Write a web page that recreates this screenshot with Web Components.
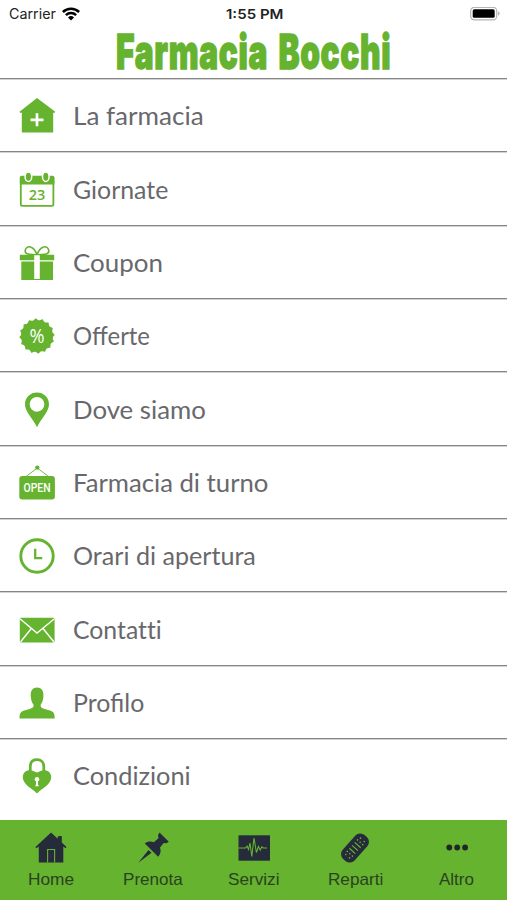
<!DOCTYPE html>
<html lang="it">
<head>
<meta charset="utf-8">
<title>Farmacia Bocchi</title>
<style>
    body {
        margin: 0;
        background: #fff;
    }
</style>
</head>
<body>
<pharmacy-app></pharmacy-app>

<script>
const GREEN = '#65b32e';

const ICONS = {
    house: `<path fill="currentColor" d="M18 0L.5 13.8l.9 1.2 1.400-.5V34.5h31.400V14.500l1.200.5.900-1.200z"/>
        <path stroke="#fff" stroke-width="2.7" d="M18 15.3v13M11.5 21.8h13"/>`,
    calendar: `<rect x="1.8" y="5" width="32.6" height="28.8" rx="1.6" fill="#fff" stroke="currentColor" stroke-width="1.8"/>
        <path fill="currentColor" d="M.8 12.6V5.5Q.8 3.8 2.5 3.8h31.2q1.7 0 1.7 1.7v7.1z"/>
        <ellipse cx="9.4" cy="4.7" rx="3.3" ry="4.700" fill="currentColor" stroke="#fff" stroke-width="1.5"/>
        <ellipse cx="26.8" cy="4.7" rx="3.3" ry="4.700" fill="currentColor" stroke="#fff" stroke-width="1.5"/>
        <text x="18" y="28.300" text-anchor="middle" font-family="Open Sans, sans-serif" font-size="15" font-weight="600" textLength="16.500" lengthAdjust="spacingAndGlyphs" fill="currentColor">23</text>`,
    gift: `<path fill="none" stroke="currentColor" stroke-width="1.6" d="M18 10C12 9 5.5 10 6.2 5.5 7.4-.5 15 .5 18 10zM18 10c6-1 12.5 0 11.8-4.5C28.600-.5 21 .5 18 10z"/>
        <path fill="currentColor" d="M.8 9.700h34.400v5.500H.8zM2.300 16.500H34V35H2.300z"/>
        <path fill="#fff" d="M15.200 10.300h5.600V34h-5.600z"/>`,
    percent: `<path class="seal" fill="currentColor"/>
        <text x="18" y="24.800" text-anchor="middle" font-family="Open Sans, sans-serif" font-size="19.500" textLength="15" lengthAdjust="spacingAndGlyphs" fill="#fff">%</text>`,
    pin: `<path fill="currentColor" fill-rule="evenodd" d="M18 35.300C14.800 27.500 6 20 6 12.200 6 5.300 11.400.5 18 .5s12 4.800 12 11.700c0 7.800-8.800 15.300-12 23.100zM18 4.900a7.400 7.400 0 1 0 0 14.800 7.400 7.400 0 0 0 0-14.800z"/>`,
    open: `<path fill="none" stroke="currentColor" stroke-width=".9" d="M7 11.500L18.300 3 29.500 11.500"/>
        <circle cx="18.300" cy="2.600" r="2.200" fill="currentColor"/>
        <rect x=".3" y="11" width="35.600" height="23.500" rx="3" fill="currentColor"/>
        <text x="18" y="27.300" text-anchor="middle" font-family="Roboto, sans-serif" font-size="12.300" font-weight="500" textLength="27" lengthAdjust="spacingAndGlyphs" fill="#fff">OPEN</text>`,
    clock: `<circle cx="18" cy="18" r="16.200" fill="none" stroke="currentColor" stroke-width="2.900"/>
        <path fill="none" stroke="currentColor" stroke-width="2.300" d="M16.200 10.800v9.300h7"/>`,
    mail: `<rect x=".8" y="5.800" width="34.800" height="24.800" rx="1.300" fill="currentColor"/>
        <path fill="none" stroke="#fff" stroke-width="1.400" d="M1 6.800L18 21 35.400 6.800M1.500 30l10.800-13.500M35 30L24 16.500"/>`,
    user: `<path fill="currentColor" d="M.5 33.500c0-6 1.500-7.200 6.500-8.500 5.500-1.300 8-2 7.500-5.500-1.700-1.800-2.500-5-2.700-8C11.300 5.500 13.800 2.500 18 2.500s6.900 3 6.400 9c-.2 3-1 6.200-2.700 8-.5 3.500 2 4.200 7.500 5.500 5 1.300 6.500 2.500 6.500 8.500z"/>`,
    heartlock: `<path fill="none" stroke="currentColor" stroke-width="2.700" d="M11.300 15V8.500C11.300 4 14 1.600 18 1.600S24.800 4 24.800 8.500V15"/>
        <path fill="currentColor" d="M18 35.500C13 30.500 3.800 26.500 3.800 19.300 3.800 14.800 7 12.200 10.700 12.200c3.300 0 5.700 1.600 7.300 2.300 1.600-.7 4-2.300 7.300-2.300 3.700 0 6.900 2.600 6.900 7.100C32.200 26.500 23 30.500 18 35.500z"/>
        <circle cx="18" cy="21.300" r="2.300" fill="#fff"/>
        <path fill="#fff" d="M17 22h2v4.500l1 1.700h-4l1-1.700z"/>`,
    home: `<path fill="currentColor" d="M16 .5L.5 15l1 1.200L3.800 14.500V30.500h24.500V14.500l2.200 1.700 1-1.200-4.700-4.400V4l-4 .2v2.600z"/>
        <path fill="none" stroke="${GREEN}" stroke-width="1.100" d="M12.600 30.500V17.500h7v13"/>`,
    pushpin: `<path fill="currentColor" d="M22.500.5l9.300 9.300-2.500 1.500-2.600-.4-3.700 4.700c1.200 3.500.8 6.300-1.800 9.200L7.800 11.500c2.800-2.200 6-2.500 9-1.200l4.700-4-.5-3zM11.500 18l3 2.800L1.300 30.800z"/>`,
    pulse: `<path fill="currentColor" d="M.5 3.300h31.500v25.400H.5z"/>
        <path fill="none" stroke="${GREEN}" stroke-width="1.100" d="M.5 16h7l1.600-2 1.400 3.500L12 11l1.800 13.500L16 6l2.400 14.500 2-6 1.800 3.500 1.600-3.200 1.500 1.200H29"/>`,
    plaster: `<g transform="rotate(-48 16 16)">
            <rect x="0" y="8" width="32" height="16" rx="6.500" fill="currentColor"/>
            <path stroke="${GREEN}" stroke-width="1.200" d="M12 12v8M16 12v8M20 12v8"/>
            <g fill="${GREEN}"><circle cx="5" cy="13.500" r=".8"/><circle cx="5" cy="18.500" r=".8"/><circle cx="8.300" cy="12.500" r=".8"/><circle cx="8.300" cy="16" r=".8"/><circle cx="8.300" cy="19.500" r=".8"/><circle cx="27" cy="13.500" r=".8"/><circle cx="27" cy="18.500" r=".8"/><circle cx="23.700" cy="12.500" r=".8"/><circle cx="23.700" cy="16" r=".8"/><circle cx="23.700" cy="19.500" r=".8"/></g>
        </g>`,
    dots: `<g fill="#22262a"><circle cx="8.300" cy="15.500" r="2.900"/><circle cx="16.200" cy="15.500" r="2.900"/><circle cx="24.100" cy="15.500" r="2.900"/></g>`
};

class AppIcon extends HTMLElement {
    connectedCallback() {
        const size = Number(this.getAttribute('size')) || 36;
        this.attachShadow({ mode: 'open' });
        this.shadowRoot.innerHTML = `
            <style>
                :host { display: block; width: ${size}px; height: ${size}px; flex: none; }
                svg { display: block; overflow: visible; }
            </style>
            <svg width="${size}" height="${size}" viewBox="0 0 ${size} ${size}">${ICONS[this.getAttribute('name')]}</svg>
        `;

        // toothed edge of the discount badge
        const seal = this.shadowRoot.querySelector('.seal');
        if (seal) {
            const points = [];
            for (let i = 0; i < 180; i++) {
                const a = i * Math.PI / 90;
                const r = 15.9 + 1.9 * (1 - Math.abs(Math.sin(a * 8 + 0.6)));
                points.push((18 + r * Math.sin(a)).toFixed(2) + ' ' + (18 - r * Math.cos(a)).toFixed(2));
            }
            seal.setAttribute('d', 'M' + points.join('L') + 'z');
        }
    }
}
customElements.define('app-icon', AppIcon);

// Single line of text condensed or widened to a given width
class FitText extends HTMLElement {
    connectedCallback() {
        const width = Number(this.getAttribute('width'));
        this.attachShadow({ mode: 'open' });
        this.shadowRoot.innerHTML = `
            <style>
                :host { display: block; width: ${width}px; white-space: nowrap; }
                span { display: inline-block; transform-origin: 0 50%; }
            </style>
            <span><slot></slot></span>
        `;
        const span = this.shadowRoot.querySelector('span');
        span.style.transform = `scaleX(${width / span.offsetWidth})`;
    }
}
customElements.define('fit-text', FitText);

class StatusBar extends HTMLElement {
    connectedCallback() {
        this.attachShadow({ mode: 'open' });
        this.shadowRoot.innerHTML = `
            <style>
                :host {
                    display: grid;
                    grid-template-columns: 1fr auto 1fr;
                    align-items: center;
                    height: 28px;
                    padding: 0 7px 0 9px;
                    box-sizing: border-box;
                    font: 14px/28px Inter, sans-serif;
                    color: #222;
                }
                .carrier { display: flex; align-items: center; gap: 6px; }
                .time { font-size: 13.500px; font-weight: 600; }
                .battery { justify-self: end; }
                svg { display: block; }
            </style>
            <div class="carrier">
                <fit-text width="47">Carrier</fit-text>
                <svg width="18" height="14" viewBox="0 0 18 14">
                    <path fill="none" stroke="#000" stroke-width="2.500" d="M.9 5a11.500 11.500 0 0 1 16.200 0M3.900 8.200a7.300 7.300 0 0 1 10.200 0"/>
                    <path fill="#000" d="M9 13.400l-3-3a4.300 4.300 0 0 1 6 0z"/>
                </svg>
            </div>
            <fit-text class="time" width="58">1:55 PM</fit-text>
            <svg class="battery" width="30" height="14" viewBox="0 0 30 14">
                <rect x=".7" y=".3" width="26" height="12.500" rx="3.600" fill="#fff" stroke="#b5b5b5" stroke-width="1.200"/>
                <rect x="2.700" y="2.300" width="22" height="8.500" rx="1.600" fill="#000"/>
                <path fill="#b5b5b5" d="M28 4.300q1.700.8 1.700 2.200T28 8.700z"/>
            </svg>
        `;
    }
}
customElements.define('status-bar', StatusBar);

class MenuRow extends HTMLElement {
    connectedCallback() {
        this.attachShadow({ mode: 'open' });
        this.shadowRoot.innerHTML = `
            <style>
                :host {
                    display: flex;
                    align-items: center;
                    gap: 17.500px;
                    height: 73.330px;
                    padding: 2.500px 0 0 19px;
                    box-sizing: border-box;
                    border-top: 1px solid #858585;
                    box-shadow: inset 0 1px #d2d2d2;
                    font: 24.500px/30px Lato, sans-serif;
                    color: #68686c;
                }
                :host([plain]) { font-variant-ligatures: none; }
                app-icon { color: ${GREEN}; }
            </style>
            <app-icon name="${this.getAttribute('icon')}"></app-icon>
            <fit-text width="${this.getAttribute('width')}"><slot></slot></fit-text>
        `;
    }
}
customElements.define('menu-row', MenuRow);

class TabItem extends HTMLElement {
    connectedCallback() {
        this.attachShadow({ mode: 'open' });
        this.shadowRoot.innerHTML = `
            <style>
                :host {
                    display: flex;
                    flex-direction: column;
                    align-items: center;
                    flex: 1;
                    gap: 5px;
                    padding: 11.500px 0 0 1px;
                    font: 16.500px/20px "Liberation Sans", sans-serif;
                    color: #2b4220;
                }
                app-icon { color: #262b3b; }
            </style>
            <app-icon name="${this.getAttribute('icon')}" size="32"></app-icon>
            <fit-text width="${this.getAttribute('width')}"><slot></slot></fit-text>
        `;
    }
}
customElements.define('tab-item', TabItem);

class PharmacyApp extends HTMLElement {
    connectedCallback() {
        this.attachShadow({ mode: 'open' });
        this.shadowRoot.innerHTML = `
            <style>
                :host {
                    display: flex;
                    flex-direction: column;
                    width: 507px;
                    height: 900px;
                    overflow: hidden;
                }
                header {
                    display: flex;
                    justify-content: center;
                    height: 50px;
                    font: 900 47.500px/48px Inter, sans-serif;
                    letter-spacing: 1px;
                    word-spacing: 5px;
                    -webkit-text-stroke: 1.300px ${GREEN};
                    color: ${GREEN};
                }
                main { flex: 1; }
                nav {
                    display: flex;
                    height: 80px;
                    background: ${GREEN};
                }
            </style>
            <status-bar></status-bar>
            <header><fit-text width="275">Farmacia Bocchi</fit-text></header>
            <main>
                <menu-row icon="house" width="131">La farmacia</menu-row>
                <menu-row icon="calendar" width="95.500">Giornate</menu-row>
                <menu-row icon="gift" width="90">Coupon</menu-row>
                <menu-row icon="percent" width="77">Offerte</menu-row>
                <menu-row icon="pin" width="132.500">Dove siamo</menu-row>
                <menu-row icon="open" width="195">Farmacia di turno</menu-row>
                <menu-row icon="clock" width="182.500">Orari di apertura</menu-row>
                <menu-row icon="mail" width="89" plain>Contatti</menu-row>
                <menu-row icon="user" width="71">Profilo</menu-row>
                <menu-row icon="heartlock" width="118">Condizioni</menu-row>
            </main>
            <nav>
                <tab-item icon="home" width="46">Home</tab-item>
                <tab-item icon="pushpin" width="60">Prenota</tab-item>
                <tab-item icon="pulse" width="52">Servizi</tab-item>
                <tab-item icon="plaster" width="55">Reparti</tab-item>
                <tab-item icon="dots" width="35">Altro</tab-item>
            </nav>
        `;
    }
}
customElements.define('pharmacy-app', PharmacyApp);
</script>
</body>
</html>
